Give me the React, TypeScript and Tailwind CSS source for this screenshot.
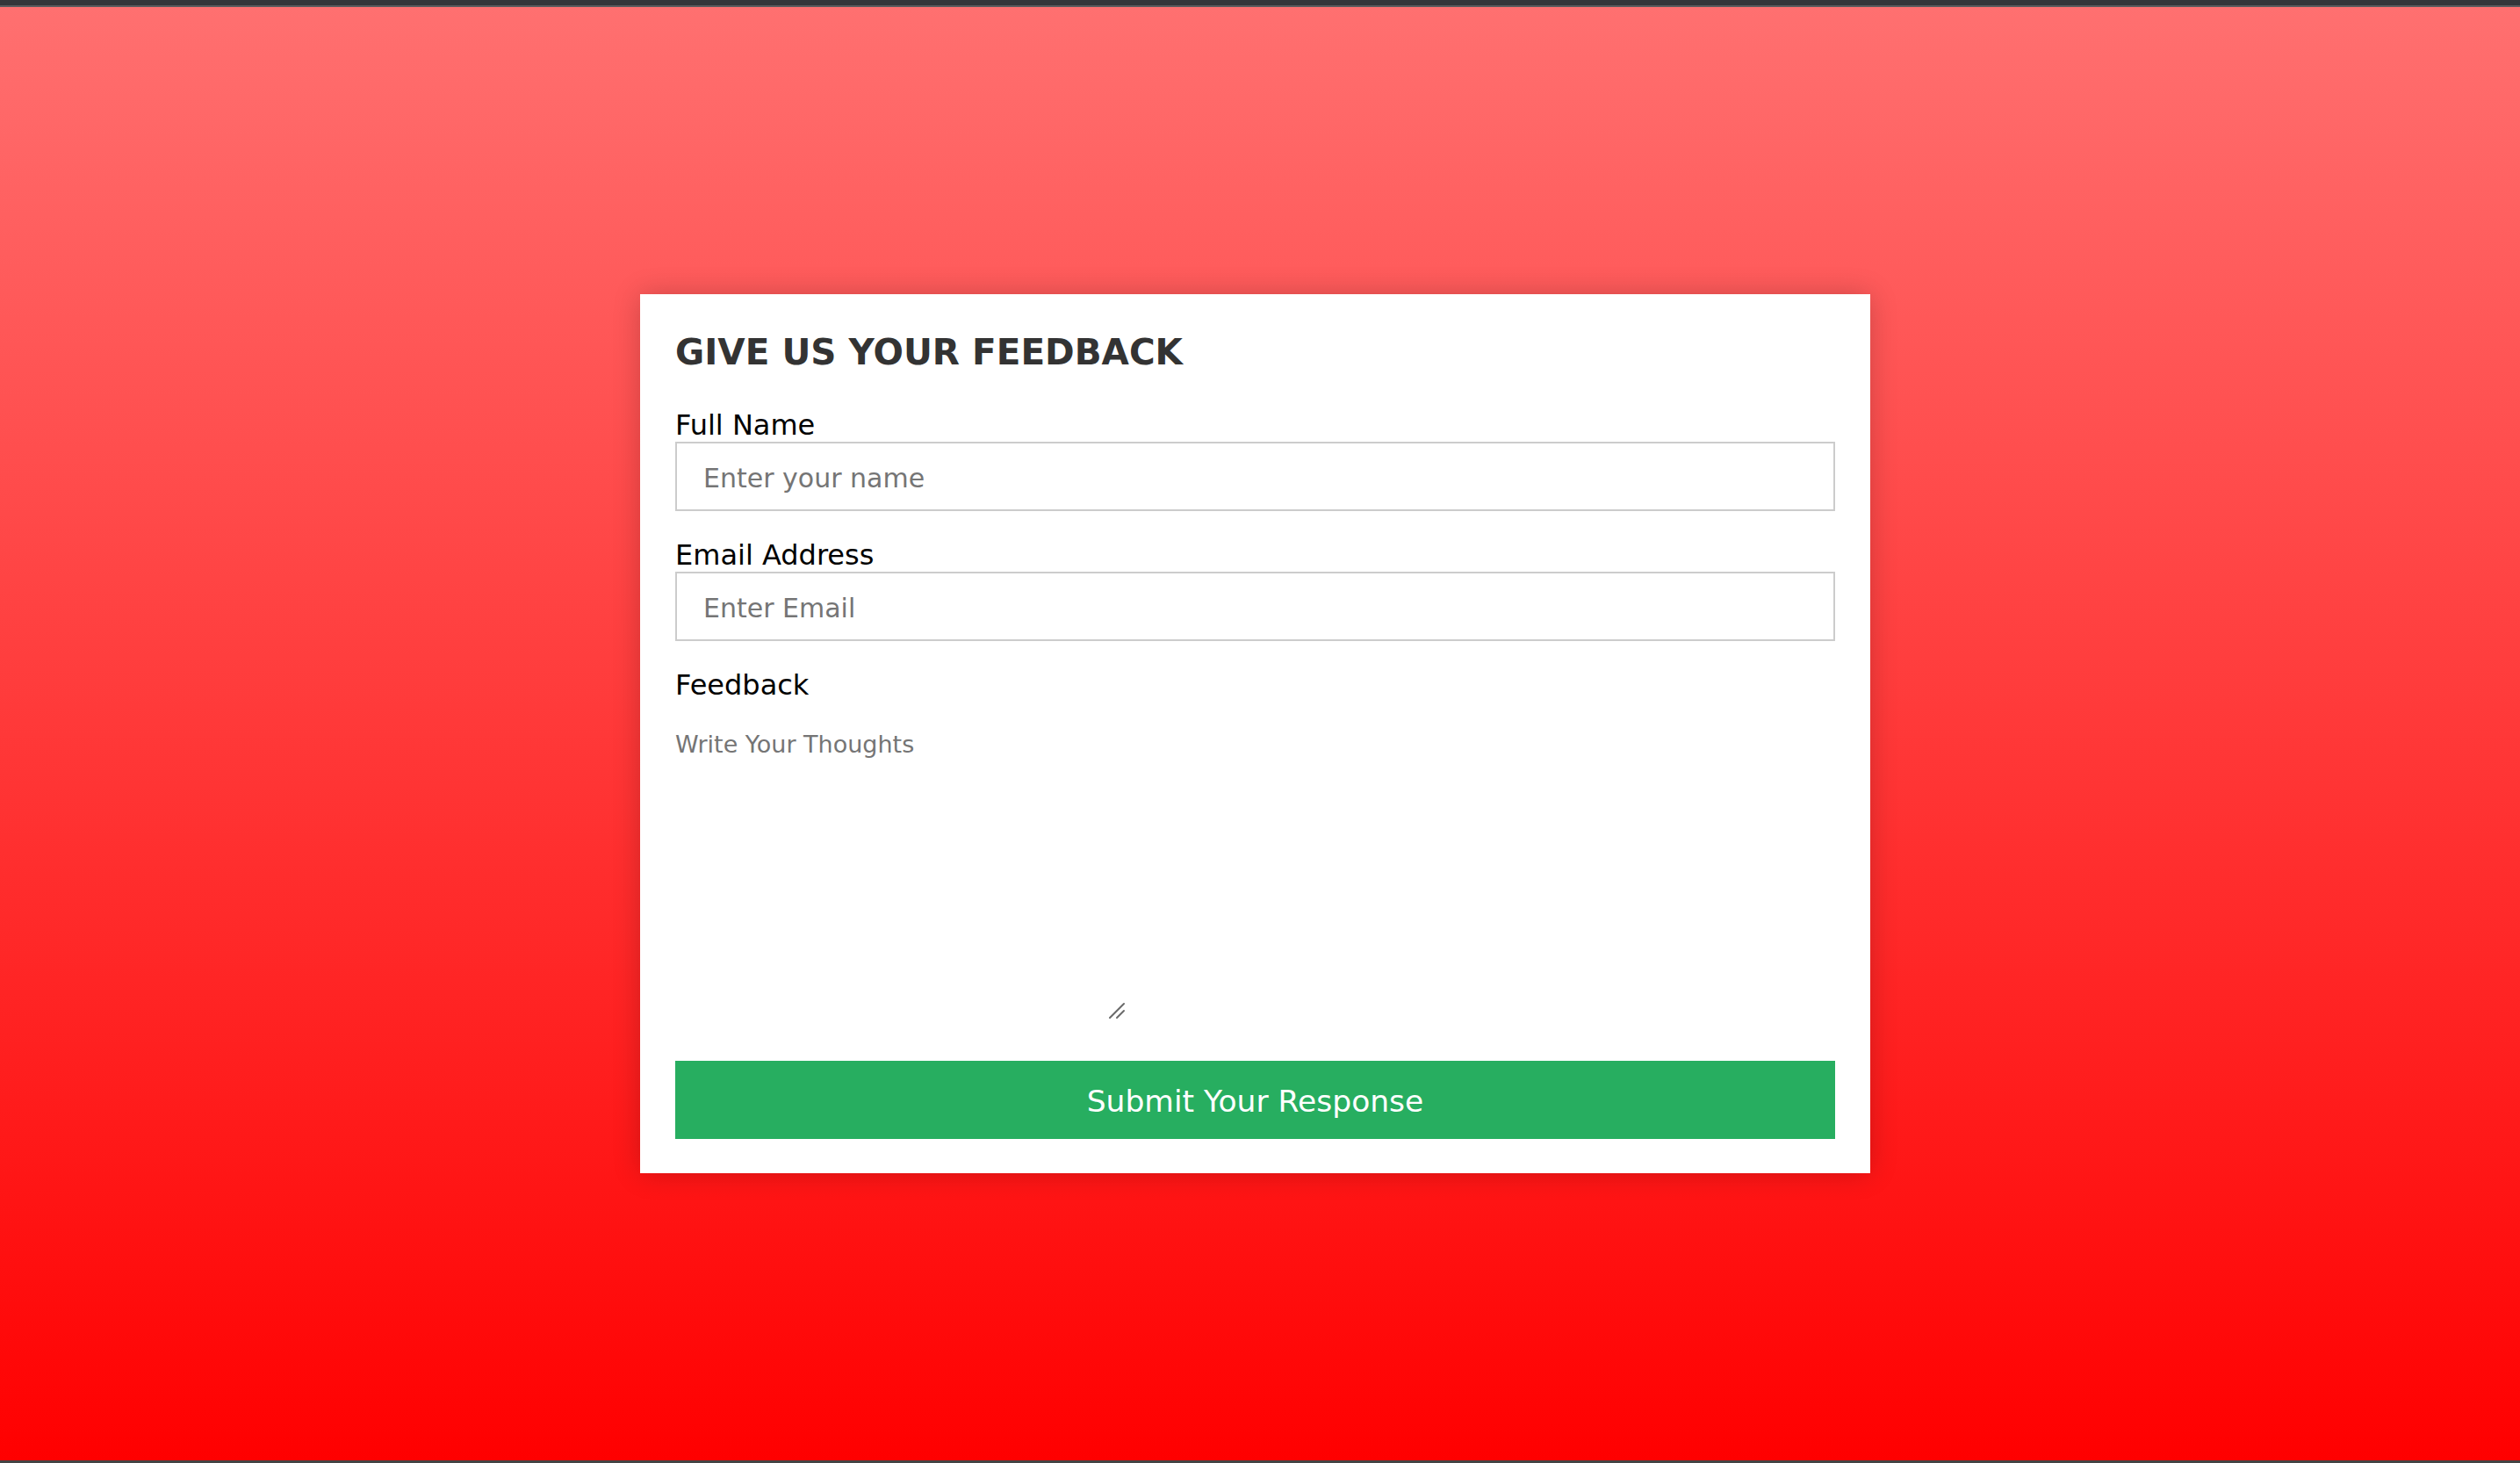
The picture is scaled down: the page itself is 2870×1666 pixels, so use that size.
import React from 'react';

export default function App() {
  return (
    <div className="w-full h-screen flex flex-col font-['DejaVu_Sans',sans-serif] overflow-hidden">
      {/* window chrome strip */}
      <div className="h-[6px] bg-[#35363a]" />
      <div className="h-[2px] bg-[#5a5b5e]" />

      <main className="flex-1 flex items-center justify-center pr-[11px] bg-[linear-gradient(to_bottom,#ff7070,#ff0000)]">
        <form
          className="w-[1401px] bg-white px-[40px] pt-[43px] pb-[39px] shadow-[0_0_30px_rgba(0,0,0,0.2)]"
          onSubmit={(e) => e.preventDefault()}
        >
          <h2 className="text-[40.5px] leading-[46px] font-bold text-[#333] mb-[42px]">GIVE US YOUR FEEDBACK</h2>

          <div className="mb-[32px]">
            <label className="block text-[32px] leading-[37px] text-black">Full Name</label>
            <input
              type="text"
              placeholder="Enter your name"
              className="block w-full h-[79px] border-2 border-[#ccc] px-[30px] pt-[4px] text-[30px] text-black placeholder:text-[#757575] outline-none"
            />
          </div>

          <div className="mb-[32px]">
            <label className="block text-[32px] leading-[37px] text-black">Email Address</label>
            <input
              type="email"
              placeholder="Enter Email"
              className="block w-full h-[79px] border-2 border-[#ccc] px-[30px] pt-[4px] text-[30px] text-black placeholder:text-[#757575] outline-none"
            />
          </div>

          <div>
            <label className="block text-[32px] leading-[37px] text-black">Feedback</label>
            <div className="relative mt-[33px] w-[513px] h-[329px]">
              <textarea
                placeholder="Write Your Thoughts"
                className="block w-full h-full p-0 border-0 outline-none resize-none text-[27px] leading-[31px] text-black placeholder:text-[#757575] bg-white"
              />
              {/* resize grip */}
              <svg
                className="absolute right-0 bottom-0 pointer-events-none"
                width="20"
                height="20"
                viewBox="0 0 20 20"
              >
                <path d="M2 18 L18 2" stroke="#6b6b6b" strokeWidth="2" strokeLinecap="round" />
                <path d="M10 18 L18 10" stroke="#6b6b6b" strokeWidth="2" strokeLinecap="round" />
              </svg>
            </div>
          </div>

          <button
            type="submit"
            className="block w-full mt-[47px] h-[89px] bg-[#27ae60] text-white text-[34.5px] leading-[40px] pt-[2px]"
          >
            Submit Your Response
          </button>
        </form>
      </main>

      <div className="h-[3px] bg-[#444]" />
    </div>
  );
}
